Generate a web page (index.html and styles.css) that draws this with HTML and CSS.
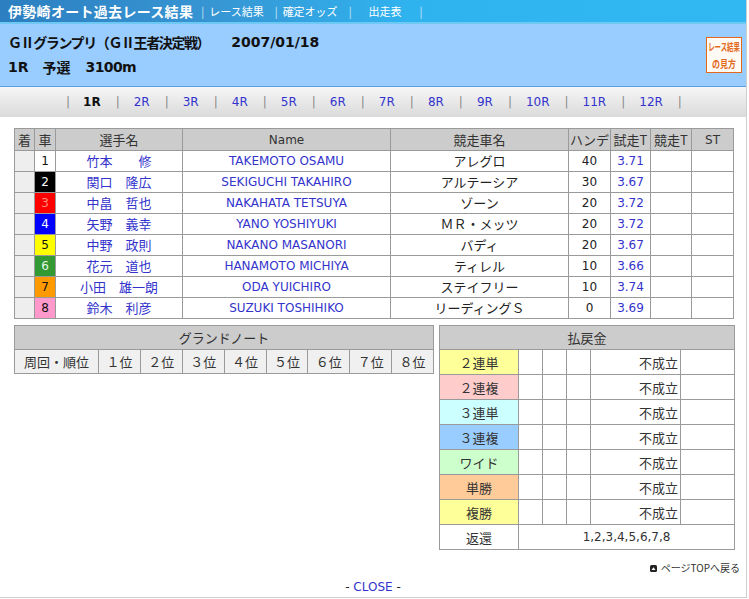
FILE: index.html
```html
<!DOCTYPE html>
<html lang="ja">
<head>
<meta charset="utf-8">
<title>伊勢崎オート過去レース結果</title>
<link rel="stylesheet" href="styles.css">
</head>
<body>
<div class="page">
  <div class="titlebar">
    <span class="title">伊勢崎オート過去レース結果</span>
    <nav class="toplinks">
      <span class="sep">|</span><a href="#">レース結果</a><span class="sep">|</span><a href="#">確定オッズ</a><span class="sep">|</span><a href="#" class="wide">出走表</a><span class="sep">|</span>
    </nav>
  </div>
  <div class="band">
    <div class="info">
      <div class="line1"><span class="cjk tight">ＧⅡグランプリ（ＧⅡ王者決定戦）</span><span class="date">2007/01/18</span></div>
      <div class="line2"><span>1R</span><span class="cjk gapl">予選</span><span class="gapl dist">3100m</span></div>
    </div>
    <a href="#" class="guide"><span class="g1">レース結果</span><span class="g2">の見方</span></a>
  </div>
  <div class="racenav">
    <span class="sep">|</span><b class="cur">1R</b><span class="sep">|</span><a href="#">2R</a><span class="sep">|</span><a href="#">3R</a><span class="sep">|</span><a href="#">4R</a><span class="sep">|</span><a href="#">5R</a><span class="sep">|</span><a href="#">6R</a><span class="sep">|</span><a href="#">7R</a><span class="sep">|</span><a href="#">8R</a><span class="sep">|</span><a href="#">9R</a><span class="sep">|</span><a href="#">10R</a><span class="sep">|</span><a href="#">11R</a><span class="sep">|</span><a href="#">12R</a><span class="sep">|</span>
  </div>

  <table class="result">
    <colgroup>
      <col class="c-rank"><col class="c-car"><col class="c-jname"><col class="c-name"><col class="c-bike"><col class="c-hande"><col class="c-st1"><col class="c-st2"><col class="c-st3">
    </colgroup>
    <tr class="head">
      <td class="jp">着</td><td class="jp">車</td><td class="jp">選手名</td><td>Name</td><td class="jp">競走車名</td><td class="jp">ハンデ</td><td class="jp">試走T</td><td class="jp">競走T</td><td>ST</td>
    </tr>
    <tr><td class="rank"></td><td class="car car1">1</td><td class="jp blue">竹本　　修</td><td class="blue">TAKEMOTO OSAMU</td><td class="jp">アレグロ</td><td>40</td><td class="blue">3.71</td><td></td><td></td></tr>
    <tr><td class="rank"></td><td class="car car2">2</td><td class="jp blue">関口　隆広</td><td class="blue">SEKIGUCHI TAKAHIRO</td><td class="jp">アルテーシア</td><td>30</td><td class="blue">3.67</td><td></td><td></td></tr>
    <tr><td class="rank"></td><td class="car car3">3</td><td class="jp blue">中畠　哲也</td><td class="blue">NAKAHATA TETSUYA</td><td class="jp">ゾーン</td><td>20</td><td class="blue">3.72</td><td></td><td></td></tr>
    <tr><td class="rank"></td><td class="car car4">4</td><td class="jp blue">矢野　義幸</td><td class="blue">YANO YOSHIYUKI</td><td class="jp">ＭＲ・メッツ</td><td>20</td><td class="blue">3.72</td><td></td><td></td></tr>
    <tr><td class="rank"></td><td class="car car5">5</td><td class="jp blue">中野　政則</td><td class="blue">NAKANO MASANORI</td><td class="jp">バディ</td><td>20</td><td class="blue">3.67</td><td></td><td></td></tr>
    <tr><td class="rank"></td><td class="car car6">6</td><td class="jp blue">花元　道也</td><td class="blue">HANAMOTO MICHIYA</td><td class="jp">ティレル</td><td>10</td><td class="blue">3.66</td><td></td><td></td></tr>
    <tr><td class="rank"></td><td class="car car7">7</td><td class="jp blue">小田　雄一朗</td><td class="blue">ODA YUICHIRO</td><td class="jp">ステイフリー</td><td>10</td><td class="blue">3.74</td><td></td><td></td></tr>
    <tr><td class="rank"></td><td class="car car8">8</td><td class="jp blue">鈴木　利彦</td><td class="blue">SUZUKI TOSHIHIKO</td><td class="jp">リーディングＳ</td><td>0</td><td class="blue">3.69</td><td></td><td></td></tr>
  </table>

  <div class="lower">
    <table class="gnote">
      <colgroup><col class="g-first"><col><col><col><col><col><col><col><col></colgroup>
      <tr class="head"><td colspan="9" class="jp">グランドノート</td></tr>
      <tr class="sub"><td class="jp">周回・順位</td><td class="jp">１位</td><td class="jp">２位</td><td class="jp">３位</td><td class="jp">４位</td><td class="jp">５位</td><td class="jp">６位</td><td class="jp">７位</td><td class="jp">８位</td></tr>
    </table>

    <table class="pay">
      <colgroup><col class="p-label"><col class="p-s"><col class="p-s"><col class="p-s"><col class="p-amt"><col class="p-last"></colgroup>
      <tr class="head"><td colspan="6" class="jp">払戻金</td></tr>
      <tr><td class="jp lab l-2t">２連単</td><td></td><td></td><td></td><td class="jp amt">不成立</td><td></td></tr>
      <tr><td class="jp lab l-2f">２連複</td><td></td><td></td><td></td><td class="jp amt">不成立</td><td></td></tr>
      <tr><td class="jp lab l-3t">３連単</td><td></td><td></td><td></td><td class="jp amt">不成立</td><td></td></tr>
      <tr><td class="jp lab l-3f">３連複</td><td></td><td></td><td></td><td class="jp amt">不成立</td><td></td></tr>
      <tr><td class="jp lab l-wd">ワイド</td><td></td><td></td><td></td><td class="jp amt">不成立</td><td></td></tr>
      <tr><td class="jp lab l-tn">単勝</td><td></td><td></td><td></td><td class="jp amt">不成立</td><td></td></tr>
      <tr><td class="jp lab l-fk">複勝</td><td></td><td></td><td></td><td class="jp amt">不成立</td><td></td></tr>
      <tr><td class="jp lab">返還</td><td colspan="5">1,2,3,4,5,6,7,8</td></tr>
    </table>
  </div>

  <div class="pagetop">
    <a href="#"><svg width="7" height="7" viewBox="0 0 7 7" aria-hidden="true"><rect x="0" y="0" width="7" height="7" rx="1.5" fill="#222"/><path d="M1.5 5 L3.5 2.2 L5.5 5 Z" fill="#fff"/></svg><span>ページTOPへ戻る</span></a>
  </div>
  <div class="close">- <a href="#">CLOSE</a> -</div>
</div>
</body>
</html>
```

FILE: styles.css
```css
* { box-sizing: border-box; }

body {
  margin: 0;
  font-family: "DejaVu Sans", "Noto Sans CJK JP", sans-serif;
  font-size: 12px;
  color: #222;
  background: #fff;
}

a { text-decoration: none; }

.cjk { font-family: "Noto Sans CJK JP", "DejaVu Sans", sans-serif; }

.page {
  width: 747px;
  height: 598px;
  border-right: 1px solid #cfcfcf;
  border-bottom: 1px solid #cfcfcf;
}

/* title bar */
.titlebar {
  height: 24px;
  display: flex;
  align-items: center;
  padding-left: 8px;
  background: linear-gradient(to right, #2c7fc0 0%, #3794d2 27%, #2fb3ef 55%, #31b8f2 100%);
  border-bottom: 2px solid #6ec8f4;
}
.title {
  font-family: "Noto Sans CJK JP", sans-serif;
  font-weight: bold;
  font-size: 14px;
  color: #fff;
  line-height: 22px;
  letter-spacing: 0.3px;
}
.toplinks {
  display: flex;
  align-items: center;
  margin-left: 8px;
  font-family: "Noto Sans CJK JP", sans-serif;
  font-size: 11px;
  color: #fff;
}
.toplinks .sep { color: #cfe6f7; font-size: 11px; }
.toplinks a { color: #fff; margin: 0 11px 0 5px; }
.toplinks a.wide { margin: 0 18px 0 17px; }

/* info band */
.band {
  height: 63px;
  background: #99ccff;
  border-bottom: 1px solid #5b9fe2;
  display: flex;
  justify-content: space-between;
  align-items: flex-start;
}
.info {
  padding: 8px 0 0 8px;
  font-weight: bold;
  font-size: 14px;
  color: #111;
}
.line1, .line2 { height: 20px; line-height: 20px; display: flex; }
.line2 { margin-top: 5px; }
.tight { letter-spacing: -1.4px; }
.date { margin-left: 22px; }
.gapl { margin-left: 14px; }
.dist { margin-left: 15px; letter-spacing: -0.6px; }

.guide {
  margin: 13px 4px 0 0;
  width: 36px;
  height: 36px;
  border: 1px solid #e2691c;
  background: #fffaf4;
  display: flex;
  flex-direction: column;
  align-items: center;
  justify-content: flex-start;
  padding-top: 6px;
  gap: 8px;
  color: #e2691c;
  font-family: "Noto Sans CJK JP", sans-serif;
  font-weight: bold;
}
.guide span {
  display: block;
  white-space: nowrap;
  height: 8px;
  line-height: 8px;
}
.g1 { font-size: 6.4px; transform: scaleY(1.6); }
.g2 { font-size: 8px; transform: scaleY(1.3); }

/* race nav */
.racenav {
  height: 30px;
  display: flex;
  align-items: center;
  padding-left: 66px;
  background: linear-gradient(#f6f6f6, #dadada);
  font-size: 12px;
}
.racenav .sep { color: #8a8a8a; }
.racenav a, .racenav .cur { margin: 0 15px 0 14px; }
.racenav .cur { margin-left: 13px; }
.racenav a { color: #3333cc; }
.racenav .cur { color: #111; }

/* tables */
table {
  border-collapse: collapse;
  table-layout: fixed;
}
td {
  border: 1px solid #9a9a9a;
  padding: 0;
  text-align: center;
  white-space: nowrap;
  overflow: hidden;
}
td.jp {
  font-family: "Noto Sans CJK JP", sans-serif;
  font-size: 13px;
}
tr.head td {
  background: #cccccc;
  color: #333;
}

.result {
  margin: 11px 0 0 14px;
  width: 719px;
}
.result td { height: 21px; line-height: 18px; }
.result tr.head td { height: 22px; }
.c-rank { width: 20px; }
.c-car { width: 21px; }
.c-jname { width: 127px; }
.c-name { width: 208px; }
.c-bike { width: 178px; }
.c-hande { width: 42px; }
.c-st1 { width: 40px; }
.c-st2 { width: 41px; }
.c-st3 { width: 42px; }

.rank { background: #eeeeee; }
.blue { color: #3333cc; }
.car1 { background: #fff; color: #111; }
.car2 { background: #000; color: #fff; }
.car3 { background: #ff0000; color: #ff8a7a; }
.car4 { background: #0000ff; color: #fff; }
.car5 { background: #ffff00; color: #111; }
.car6 { background: #339933; color: #e6f5e6; }
.car7 { background: #ff9900; color: #111; }
.car8 { background: #ff99cc; color: #111; }

.lower {
  display: flex;
  align-items: flex-start;
  gap: 5px;
  margin: 6px 0 0 14px;
}
.gnote { width: 420px; }
.gnote td { height: 24px; color: #333; }
.gnote tr.sub td { background: #f0f0f0; }
.g-first { width: 84px; }

.pay { width: 295px; }
.pay td { height: 25px; color: #333; }
.pay tr.head td { height: 24px; }
.p-label { width: 79px; }
.p-s { width: 24px; }
.p-amt { width: 90px; }
.p-last { width: 54px; }
.pay td.amt { text-align: right; padding-right: 2px; }
.l-2t { background: #ffff99; }
.l-2f { background: #ffcccc; }
.l-3t { background: #ccffff; }
.l-3f { background: #99ccff; }
.l-wd { background: #ccffcc; }
.l-tn { background: #ffcc99; }
.l-fk { background: #ffff99; }

.pagetop {
  margin-top: 11px;
  display: flex;
  justify-content: flex-end;
  padding-right: 6px;
  height: 14px;
}
.pagetop a {
  display: flex;
  align-items: center;
  gap: 4px;
  color: #333;
  font-family: "Noto Sans CJK JP", sans-serif;
  font-size: 10px;
  line-height: 14px;
}

.close {
  margin-top: 5px;
  text-align: center;
  font-size: 12px;
  line-height: 14px;
  color: #222;
}
.close a { color: #3333cc; }
```
